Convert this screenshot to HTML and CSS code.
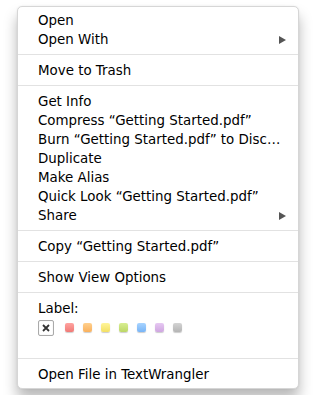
FILE: index.html
```html
<!DOCTYPE html>
<html lang="en">
<head>
  <meta charset="UTF-8" />
  <title>Context menu</title>
  <link rel="stylesheet" href="styles.css">
</head>
<body>
  <div class="menu">
    <div class="item">Open</div>
    <div class="item">Open With <span class="arrow"></span></div>
    <div class="sep"></div>
    <div class="item">Move to Trash</div>
    <div class="sep"></div>
    <div class="item">Get Info</div>
    <div class="item">Compress “Getting Started.pdf”</div>
    <div class="item">Burn “Getting Started.pdf” to Disc…</div>
    <div class="item">Duplicate</div>
    <div class="item">Make Alias</div>
    <div class="item">Quick Look “Getting Started.pdf”</div>
    <div class="item">Share <span class="arrow"></span></div>
    <div class="sep"></div>
    <div class="item">Copy “Getting Started.pdf”</div>
    <div class="sep"></div>
    <div class="item">Show View Options</div>
    <div class="sep"></div>
    <div class="item">Label:</div>
    <div class="labels">
      <span class="none">
        <svg width="10" height="10" viewBox="0 0 10 10"><path d="M2 2L8 8M8 2L2 8" stroke="#333" stroke-width="1.8"/></svg>
      </span>
      <span class="dot red"></span>
      <span class="dot orange"></span>
      <span class="dot yellow"></span>
      <span class="dot green"></span>
      <span class="dot blue"></span>
      <span class="dot purple"></span>
      <span class="dot gray"></span>
    </div>
    <div class="sep"></div>
    <div class="item">Open File in TextWrangler</div>
  </div>
</body>
</html>
```

FILE: styles.css
```css
body {
  margin: 0;
  padding: 6px 17px;
  background: #fff;
  font-family: "DejaVu Sans", sans-serif;
}

.menu {
  width: 282px;
  box-sizing: border-box;
  padding: 4px 0;
  background: #fff;
  border: 1px solid #d6d6d6;
  border-radius: 5px;
  box-shadow: 0 10px 14px rgba(0, 0, 0, 0.28), 0 0 2px rgba(0, 0, 0, 0.08);
}

.item {
  height: 19px;
  line-height: 19px;
  padding-left: 20px;
  padding-right: 12px;
  font-size: 13.4px;
  color: #000;
  display: flex;
  justify-content: space-between;
  align-items: center;
  white-space: nowrap;
}

.arrow {
  width: 0;
  height: 0;
  border-top: 4px solid transparent;
  border-bottom: 4px solid transparent;
  border-left: 7px solid #555;
}

.sep {
  height: 1px;
  margin: 5px 0 6px;
  background: #e2e2e2;
}

.labels {
  height: 35px;
  padding-left: 20px;
  display: flex;
  align-items: flex-start;
  padding-top: 2px;
  box-sizing: border-box;
}

.none {
  width: 16px;
  height: 16px;
  box-sizing: border-box;
  border: 1px solid #aaa;
  border-radius: 2px;
  display: flex;
  align-items: center;
  justify-content: center;
  margin-right: 11px;
  box-shadow: inset 0 0 1px #ccc;
}

.dot {
  width: 9px;
  height: 9px;
  margin-top: 3px;
  margin-right: 9px;
  border-radius: 2px;
  box-shadow: 0 1px 1px rgba(0, 0, 0, 0.2);
}

.red { background: linear-gradient(#ffa3a0, #f07a76); }
.orange { background: linear-gradient(#ffd08e, #f9b05c); }
.yellow { background: linear-gradient(#fff59a, #f3e064); }
.green { background: linear-gradient(#d8ee92, #bcd766); }
.blue { background: linear-gradient(#a8d4ff, #78b4f6); }
.purple { background: linear-gradient(#e6c8f2, #cfa6e0); }
.gray { background: linear-gradient(#d4d4d4, #b4b4b4); }
```
